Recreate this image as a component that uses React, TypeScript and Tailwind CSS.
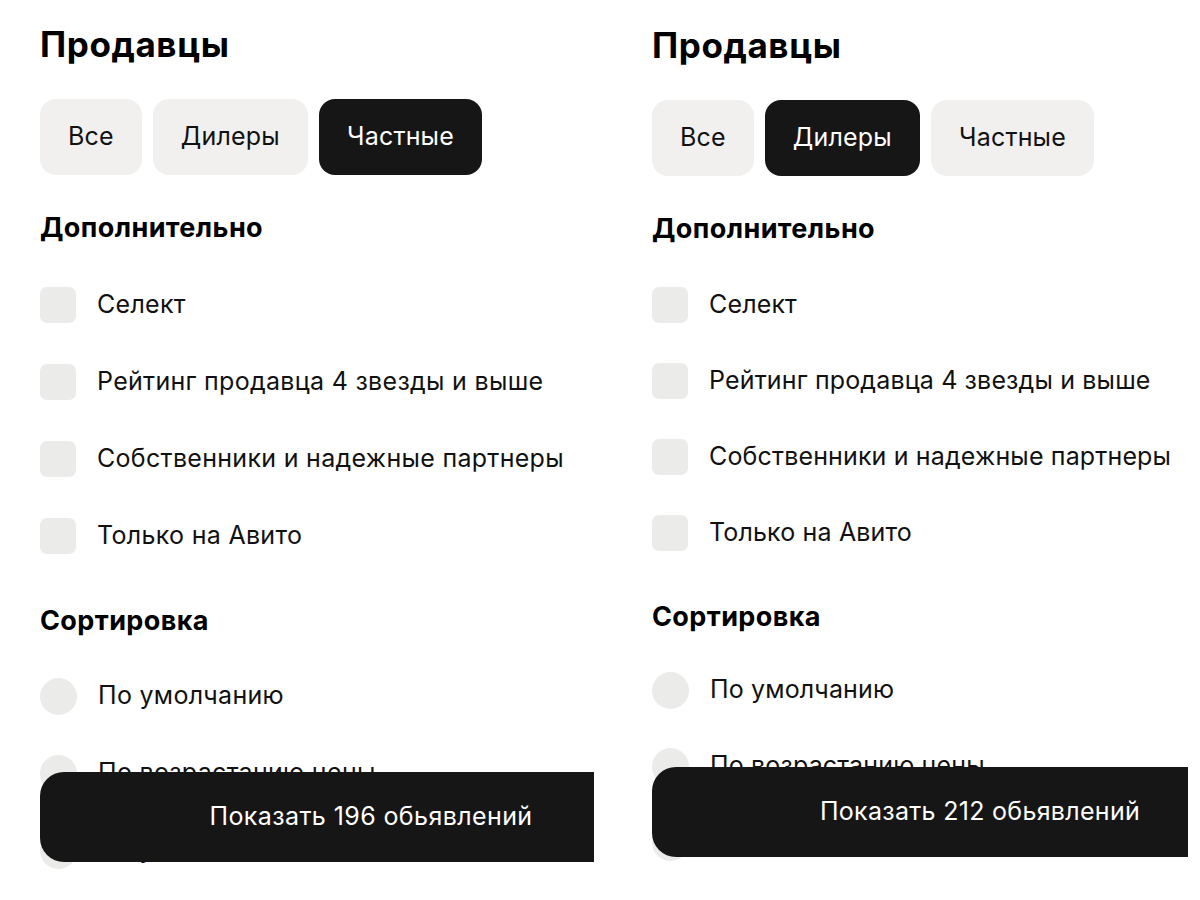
const sellers = ["Все", "Дилеры", "Частные"];

const extras = [
  "Селект",
  "Рейтинг продавца 4 звезды и выше",
  "Собственники и надежные партнеры",
  "Только на Авито",
];

const sorts = ["По умолчанию", "По возрастанию цены", "По убыванию цены"];

type PanelProps = {
  active: string;
  count: number;
  compact?: boolean;
};

function FilterPanel({ active, count, compact }: PanelProps) {
  const text = compact
    ? "text-[25px] tracking-[0.15px] text-[#111]"
    : "text-[25px] tracking-[0.3px] text-[#111]";

  return (
    <div
      className={
        compact
          ? "relative h-[900px] w-[576px] shrink-0 overflow-hidden pl-10 pt-[25px]"
          : "relative h-[900px] w-[594px] shrink-0 overflow-hidden pl-10 pt-[24px]"
      }
    >
      <h2 className="text-[35px] font-bold leading-[40px] tracking-[0.6px]">
        Продавцы
      </h2>

      {/* seller type tabs */}
      <div className="mt-[35px] flex gap-[11px]">
        {sellers.map((s) => (
          <button
            key={s}
            className={
              s === active
                ? "h-[76px] rounded-[16px] bg-[#161616] px-[28px] text-[25px] tracking-[0.2px] text-white"
                : "h-[76px] rounded-[16px] bg-[#f1f0ef] px-[28px] text-[25px] tracking-[0.2px] text-[#111]"
            }
          >
            {s}
          </button>
        ))}
      </div>

      <h3 className="mt-[37px] text-[27px] font-bold leading-[32px] tracking-[0.4px]">
        Дополнительно
      </h3>
      <div
        className={
          compact
            ? "mt-[42px] flex flex-col gap-[40px]"
            : "mt-[43px] flex flex-col gap-[41px]"
        }
      >
        {extras.map((e) => (
          <label key={e} className="flex h-9 items-center gap-[21px]">
            <span className="h-9 w-9 shrink-0 rounded-[7px] bg-[#ebebea]" />
            <span className={text}>{e}</span>
          </label>
        ))}
      </div>

      <h3
        className={
          compact
            ? "mt-[50px] text-[27px] font-bold leading-[32px] tracking-[0.4px]"
            : "mt-[51px] text-[27px] font-bold leading-[32px] tracking-[0.4px]"
        }
      >
        Сортировка
      </h3>
      <div
        className={
          compact
            ? "mt-[38px] flex flex-col gap-[38px]"
            : "mt-[40px] flex flex-col gap-[39px]"
        }
      >
        {sorts.map((s) => (
          <label key={s} className="flex h-[38px] items-center gap-[21px]">
            <span className="h-[37px] w-[37px] shrink-0 rounded-full bg-[#ebebea]" />
            <span className={text}>{s}</span>
          </label>
        ))}
      </div>

      {/* sticky footer button */}
      <button
        className={
          compact
            ? "absolute bottom-[43px] left-10 h-[90px] w-[656px] rounded-[24px] bg-[#161616] text-[25px] tracking-[0.3px] text-white"
            : "absolute bottom-[38px] left-10 h-[90px] w-[662px] rounded-[24px] bg-[#161616] text-[25px] tracking-[0.4px] text-white"
        }
      >
        Показать {count} обьявлений
      </button>
    </div>
  );
}

export default function App() {
  return (
    <div className="flex h-[900px] w-[1200px] overflow-hidden bg-white font-['Inter',sans-serif] text-black">
      <FilterPanel active="Частные" count={196} />
      <div className="ml-[18px]">
        <FilterPanel active="Дилеры" count={212} compact />
      </div>
    </div>
  );
}
